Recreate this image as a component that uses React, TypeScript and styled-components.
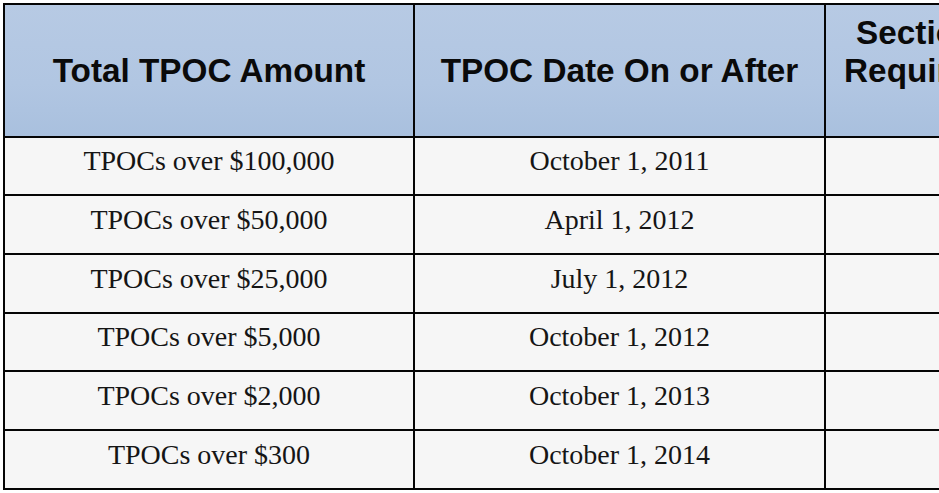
import React from "react";
import styled, { createGlobalStyle } from "styled-components";

const GlobalStyle = createGlobalStyle`
  html, body {
    margin: 0;
    padding: 0;
    background: #ffffff;
    overflow: hidden;
    width: 939px;
    height: 493px;
  }
`;

const Page = styled.div`
  padding: 3px 0 0 3px;
  width: 939px;
  height: 493px;
  box-sizing: border-box;
  overflow: hidden;
`;

const Table = styled.div`
  display: grid;
  grid-template-columns: 408px 409px 408px;
  grid-template-rows: 131px 56px 57px 57px 56px 57px 57px;
  gap: 2px;
  padding: 2px;
  background: #050505;
  width: max-content;
`;

const HeadCell = styled.div`
  display: flex;
  align-items: center;
  justify-content: center;
  text-align: center;
  background: linear-gradient(180deg, #b7cae4 0%, #b1c6e2 60%, #a9c0de 100%);
  font-family: "Liberation Sans", Arial, sans-serif;
  font-weight: 700;
  font-size: 33.3px;
  line-height: 38px;
  color: #0a0a0a;
`;

const Cell = styled.div`
  display: flex;
  align-items: center;
  justify-content: center;
  box-sizing: border-box;
  padding-bottom: 10px;
  background: #f6f6f6;
  font-family: "Liberation Serif", "Times New Roman", serif;
  font-size: 28px;
  color: #151515;
  white-space: nowrap;
`;

const rows = [
  ["TPOCs over $100,000", "October 1, 2011", "January 1, 2012"],
  ["TPOCs over $50,000", "April 1, 2012", "July 1, 2012"],
  ["TPOCs over $25,000", "July 1, 2012", "October 1, 2012"],
  ["TPOCs over $5,000", "October 1, 2012", "January 1, 2013"],
  ["TPOCs over $2,000", "October 1, 2013", "January 1, 2014"],
  ["TPOCs over $300", "October 1, 2014", "January 1, 2015"],
];

export default function App() {
  return (
    <Page>
      <GlobalStyle />
      <Table>
        <HeadCell>Total TPOC Amount</HeadCell>
        <HeadCell>TPOC Date On or After</HeadCell>
        <HeadCell>
          Section 111 Reporting
          <br />
          Required in the Quarter
          <br />
          Beginning
        </HeadCell>
        {rows.map((r) =>
          r.map((c, i) => <Cell key={r[0] + i}>{c}</Cell>)
        )}
      </Table>
    </Page>
  );
}
